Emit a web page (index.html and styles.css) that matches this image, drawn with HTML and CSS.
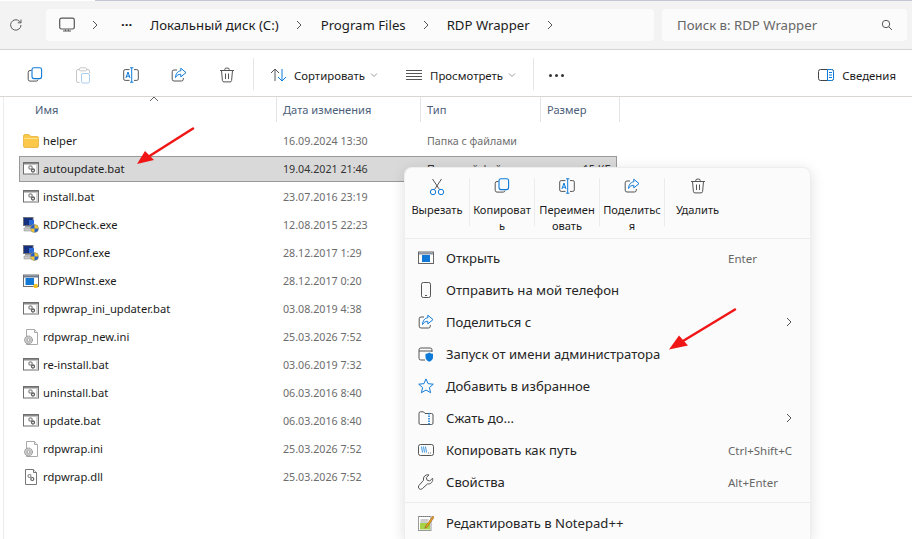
FILE: index.html
```html
<!DOCTYPE html>
<html lang="ru">
<head>
<meta charset="utf-8">
<title>RDP Wrapper</title>
<link rel="stylesheet" href="styles.css">
</head>
<body>
<svg class="defs" width="0" height="0">
  <defs>
    <symbol id="i-copy" viewBox="0 0 16 16">
      <path d="M4.5 3.5H3A1.8 1.8 0 0 0 1.2 5.3v7A1.8 1.8 0 0 0 3 14.1h6.2A1.8 1.8 0 0 0 11 12.6" fill="none" stroke="#555" stroke-width="1"/>
      <rect x="5" y=".8" width="9.6" height="10.8" rx="2" fill="none" stroke="#0f7bd8" stroke-width="1.1"/>
    </symbol>
    <symbol id="i-rename" viewBox="0 0 16 16">
      <path d="M6.5 2.6H2.2A1.5 1.5 0 0 0 .7 4.1v7.8a1.5 1.5 0 0 0 1.5 1.5h4.3M11 2.6h2.8a1.5 1.5 0 0 1 1.5 1.5v7.8a1.5 1.5 0 0 1-1.5 1.5H11" fill="none" stroke="#555"/>
      <path d="M7 .8h3.4M8.7.8v14.4M7 15.2h3.4M2.9 11 5 5l2 6M3.5 9.2h3" fill="none" stroke="#0f7bd8"/>
    </symbol>
    <symbol id="i-share" viewBox="0 0 16 16">
      <path d="M6 3H3a1.8 1.8 0 0 0-1.8 1.8v7.4A1.8 1.8 0 0 0 3 14h7.5a1.8 1.8 0 0 0 1.8-1.8V11" fill="none" stroke="#555"/>
      <path d="M9.8 1.2 15 5.6l-5.2 4.3V7.3C7.4 7.3 5.8 8.300 4.500 10.500 4.700 6.800 6.800 4 9.800 3.800z" fill="none" stroke="#0f7bd8" stroke-linejoin="round"/>
    </symbol>
    <symbol id="i-trash" viewBox="0 0 16 16">
      <path d="M1 3.500h14M5.800 3.300V2.400A1.300 1.300 0 0 1 7.100 1.100h1.800a1.300 1.300 0 0 1 1.300 1.300v.9M2.500 3.500l.9 10a1.600 1.600 0 0 0 1.600 1.400h6a1.600 1.600 0 0 0 1.600-1.400l.9-10M6.500 6.500v5.500M9.500 6.500v5.500" fill="none" stroke="#555"/>
    </symbol>
    <symbol id="i-bat" viewBox="0 0 16 16">
      <rect x=".5" y="1.500" width="15" height="11.500" fill="#fff" stroke="#6e6e6e"/>
      <rect x="1" y="2" width="14" height="1.500" fill="#8a8a8a"/>
      <rect x="13" y="3.500" width="2" height="9" fill="#d4d4d4"/>
      <circle cx="7.500" cy="6.500" r="1.700" fill="#fff" stroke="#8a8a8a" stroke-width="1.300"/>
      <circle cx="10" cy="9.500" r="1.500" fill="#fff" stroke="#5f5f5f" stroke-width="1.300"/>
    </symbol>
    <symbol id="i-ini" viewBox="0 0 16 16">
      <path d="M3.500 .5h8l3 3v12h-11z" fill="#fff" stroke="#a9a9a9"/>
      <path d="M11.500 .5v3h3" fill="#eee" stroke="#a9a9a9"/>
      <circle cx="5.500" cy="11" r="4" fill="#c9c9c9" stroke="#8c8c8c" stroke-dasharray="1.500 .8"/>
      <circle cx="5.500" cy="11" r="1.400" fill="#fff" stroke="#8c8c8c" stroke-width=".7"/>
    </symbol>
    <symbol id="i-dll" viewBox="0 0 16 16">
      <path d="M2.500 .5h8l3 3v12h-11z" fill="#fff" stroke="#777"/>
      <path d="M10.500 .5v3h3" fill="#eee" stroke="#777"/>
      <circle cx="6.500" cy="7" r="1.500" fill="#fff" stroke="#8a8a8a" stroke-width="1.200"/>
      <circle cx="9.300" cy="10" r="1.500" fill="#fff" stroke="#5f5f5f" stroke-width="1.200"/>
    </symbol>
    <symbol id="i-rdp" viewBox="0 0 16 16">
      <rect x=".5" y=".5" width="9.500" height="8" fill="#16307e" stroke="#6c6f7c"/>
      <rect x="2" y="9" width="7" height="1.500" fill="#9a9a9a"/>
      <rect x="1" y="11" width="9" height="3" fill="#c9c9c9" stroke="#888" stroke-width=".5"/>
      <rect x="6" y="3" width="5" height="5" fill="#2c6bd6"/>
      <circle cx="11.500" cy="11.500" r="4" fill="#f3c92f" stroke="#8a8a8a" stroke-width=".6"/>
      <path d="M11.500 7.700v3.800H7.700a3.800 3.800 0 0 1 3.800-3.800zM11.500 11.500h3.800a3.800 3.800 0 0 1-3.800 3.800z" fill="#2a62c8"/>
    </symbol>
    <symbol id="i-inst" viewBox="0 0 16 16">
      <rect x=".5" y="2" width="15" height="11.500" fill="#fff" stroke="#6e6e6e"/>
      <rect x="1" y="2.500" width="14" height="2" fill="#6f7c90"/>
      <rect x="2.500" y="5" width="8.500" height="7" fill="#1278d6"/>
      <path d="M11.500 11h3v4h-3l-1.500-2z" fill="#f0c020"/>
    </symbol>
    <symbol id="i-chev" viewBox="0 0 10 10">
      <path d="M3 1l4 4-4 4" fill="none" stroke="#555" stroke-width="1"/>
    </symbol>
    <symbol id="i-down" viewBox="0 0 10 10">
      <path d="M2 3.500 5 6.500l3-3" fill="none" stroke="#999" stroke-width="1"/>
    </symbol>
  </defs>
</svg>

<div class="topline"></div>
<header class="addrbar">
  <svg class="refresh" width="14" height="14" viewBox="0 0 14 14"><path d="M12 7a5.200 5.200 0 1 1-1.600-3.800L12 4.800M12 1.500v3.300H8.800" fill="none" stroke="#5c5c5c"/></svg>
  <nav class="crumbs">
    <svg class="pc" width="16" height="16" viewBox="0 0 16 16"><rect x=".7" y="1.200" width="14.600" height="10.800" rx="1.800" fill="none" stroke="#555" stroke-width="1.200"/><path d="M4 14h8M6.500 12.500v1.500M9.500 12.500v1.500" stroke="#555"/></svg>
    <svg class="chev chev-first" width="10" height="10"><use href="#i-chev"/></svg>
    <span class="dots">···</span>
    <span class="crumb c1">Локальный диск (C:)</span>
    <svg class="chev" width="10" height="10"><use href="#i-chev"/></svg>
    <span class="crumb c2">Program Files</span>
    <svg class="chev" width="10" height="10"><use href="#i-chev"/></svg>
    <span class="crumb c3">RDP Wrapper</span>
    <svg class="chev" width="10" height="10"><use href="#i-chev"/></svg>
  </nav>
  <div class="search">
    <span>Поиск в: RDP Wrapper</span>
    <svg width="12" height="12" viewBox="0 0 12 12"><circle cx="5" cy="5" r="3.700" fill="none" stroke="#555"/><path d="M7.800 7.800 11 11" stroke="#555"/></svg>
  </div>
</header>

<section class="toolbar">
  <button class="tool"><svg width="16" height="16"><use href="#i-copy"/></svg></button>
  <button class="tool tool-off"><svg width="16" height="17" viewBox="0 0 16 17"><path d="M4.500 2.500H3A1.500 1.500 0 0 0 1.500 4v10A1.500 1.500 0 0 0 3 15.500h1.500M11.500 2.500H13A1.500 1.500 0 0 1 14.500 4v2" fill="none" stroke="#c6c6c6"/><rect x="4.500" y=".8" width="7" height="3" rx="1" fill="none" stroke="#c6c6c6"/><rect x="6.500" y="6.500" width="8" height="9.500" rx="1.500" fill="none" stroke="#a9cdf0"/></svg></button>
  <button class="tool"><svg width="16" height="16"><use href="#i-rename"/></svg></button>
  <button class="tool"><svg width="16" height="16"><use href="#i-share"/></svg></button>
  <button class="tool"><svg width="16" height="16"><use href="#i-trash"/></svg></button>
  <i class="vsep"></i>
  <div class="tbtn sort">
    <svg width="18" height="16" viewBox="0 0 18 16"><path d="M5 14V2M1 6l4-4 4 4" fill="none" stroke="#555"/><path d="M12 2v12M8 10l4 4 4-4" fill="none" stroke="#0f7bd8"/></svg>
    <span>Сортировать</span>
    <svg width="10" height="10"><use href="#i-down"/></svg>
  </div>
  <div class="tbtn view">
    <svg width="16" height="12" viewBox="0 0 16 12"><path d="M0 1.500h16M0 4.500h16M0 7.500h16M0 10.500h16" stroke="#555"/></svg>
    <span>Просмотреть</span>
    <svg width="10" height="10"><use href="#i-down"/></svg>
  </div>
  <i class="vsep vsep2"></i>
  <span class="more"><b></b><b></b><b></b></span>
  <div class="details">
    <svg width="16" height="12" viewBox="0 0 16 12"><rect x=".5" y=".5" width="15" height="11" rx="2" fill="none" stroke="#444"/><path d="M9.500.5h4a2 2 0 0 1 2 2v7a2 2 0 0 1-2 2h-4z" fill="#fff" stroke="#0f7bd8"/><path d="M11 3.500h3M11 6h3M11 8.500h3" stroke="#0f7bd8"/></svg>
    <span>Сведения</span>
  </div>
</section>

<main class="files">
  <div class="cols">
    <span class="col col-name">Имя</span>
    <span class="col">Дата изменения</span>
    <span class="col">Тип</span>
    <span class="col">Размер</span>
    <svg class="caret" width="10" height="6" viewBox="0 0 10 6"><path d="M1 5l4-4 4 4" fill="none" stroke="#666"/></svg>
  </div>
  <div class="rows">
    <div class="row"><svg class="ficon" width="16" height="16" viewBox="0 0 16 16"><path d="M.5 3A1.500 1.500 0 0 1 2 1.500h4L8 3.500h6A1.500 1.500 0 0 1 15.500 5v8a1.500 1.500 0 0 1-1.500 1.500H2A1.500 1.500 0 0 1 .5 13z" fill="#fbc84a" stroke="#e4a92d" stroke-width=".7"/><path d="M.8 5.500h14.400" stroke="#fde08a"/></svg><span class="fname">helper</span><span class="fdate">16.09.2024 13:30</span><span class="ftype">Папка с файлами</span></div>
    <div class="row selected"><svg class="ficon" width="16" height="16"><use href="#i-bat"/></svg><span class="fname">autoupdate.bat</span><span class="fdate dark">19.04.2021 21:46</span><span class="ftype dark">Пакетный файл</span><span class="fsize dark">15 КБ</span></div>
    <div class="row"><svg class="ficon" width="16" height="16"><use href="#i-bat"/></svg><span class="fname">install.bat</span><span class="fdate">23.07.2016 23:19</span></div>
    <div class="row"><svg class="ficon" width="16" height="16"><use href="#i-rdp"/></svg><span class="fname">RDPCheck.exe</span><span class="fdate">12.08.2015 22:23</span></div>
    <div class="row"><svg class="ficon" width="16" height="16"><use href="#i-rdp"/></svg><span class="fname">RDPConf.exe</span><span class="fdate">28.12.2017 1:29</span></div>
    <div class="row"><svg class="ficon" width="16" height="16"><use href="#i-inst"/></svg><span class="fname">RDPWInst.exe</span><span class="fdate">28.12.2017 0:20</span></div>
    <div class="row"><svg class="ficon" width="16" height="16"><use href="#i-bat"/></svg><span class="fname">rdpwrap_ini_updater.bat</span><span class="fdate">03.08.2019 4:38</span></div>
    <div class="row"><svg class="ficon" width="16" height="16"><use href="#i-ini"/></svg><span class="fname">rdpwrap_new.ini</span><span class="fdate">25.03.2026 7:52</span></div>
    <div class="row"><svg class="ficon" width="16" height="16"><use href="#i-bat"/></svg><span class="fname">re-install.bat</span><span class="fdate">03.06.2019 7:32</span></div>
    <div class="row"><svg class="ficon" width="16" height="16"><use href="#i-bat"/></svg><span class="fname">uninstall.bat</span><span class="fdate">06.03.2016 8:40</span></div>
    <div class="row"><svg class="ficon" width="16" height="16"><use href="#i-bat"/></svg><span class="fname">update.bat</span><span class="fdate">06.03.2016 8:40</span></div>
    <div class="row"><svg class="ficon" width="16" height="16"><use href="#i-ini"/></svg><span class="fname">rdpwrap.ini</span><span class="fdate">25.03.2026 7:52</span></div>
    <div class="row"><svg class="ficon" width="16" height="16"><use href="#i-dll"/></svg><span class="fname">rdpwrap.dll</span><span class="fdate">25.03.2026 7:52</span></div>
  </div>
</main>

<aside class="menu">
  <div class="actions">
    <div class="act"><svg width="16" height="18" viewBox="0 0 16 18"><path d="M3.500 1 10.500 11.500M12.500 1 5.500 11.500" fill="none" stroke="#555"/><circle cx="4" cy="14" r="2.700" fill="none" stroke="#0f7bd8"/><circle cx="12" cy="14" r="2.700" fill="none" stroke="#0f7bd8"/></svg><span>Вырезать</span></div>
    <div class="act"><svg width="16" height="18"><use href="#i-copy" width="16" height="16"/></svg><span>Копироват<br>ь</span></div>
    <div class="act"><svg width="16" height="18"><use href="#i-rename" width="16" height="16"/></svg><span>Переимен<br>овать</span></div>
    <div class="act"><svg width="16" height="18"><use href="#i-share" width="16" height="16"/></svg><span>Поделитьс<br>я</span></div>
    <div class="act act-last"><svg width="16" height="18"><use href="#i-trash" width="16" height="16"/></svg><span>Удалить</span></div>
  </div>
  <ul class="items">
    <li class="item"><svg width="16" height="16" viewBox="0 0 16 16"><rect x=".5" y="2" width="15" height="11.500" fill="#fff" stroke="#666"/><rect x="1" y="2.500" width="14" height="2" fill="#8b95a5"/><rect x="4" y="5" width="8" height="7" fill="#1278d6"/></svg><span class="label">Открыть</span><span class="key">Enter</span></li>
    <li class="item"><svg width="16" height="16" viewBox="0 0 16 16"><rect x="3.500" y=".5" width="9" height="15" rx="1.800" fill="none" stroke="#555"/><path d="M7 13.500h2" stroke="#555"/></svg><span class="label">Отправить на мой телефон</span></li>
    <li class="item"><svg width="16" height="16"><use href="#i-share"/></svg><span class="label">Поделиться с</span><svg class="sub" width="10" height="10"><use href="#i-chev"/></svg></li>
    <li class="item"><svg width="16" height="16" viewBox="0 0 16 16"><path d="M7 14H2.800A1.800 1.800 0 0 1 1 12.200V3.800A1.800 1.800 0 0 1 2.800 2h9.400A1.800 1.800 0 0 1 14 3.800V6M1 5h13" fill="none" stroke="#555"/><path d="M11.300 6.500c1.100.9 2.400 1.200 3.700 1.200v3.600c0 2.300-1.500 3.800-3.700 4.500-2.200-.7-3.800-2.200-3.800-4.500V7.700c1.300 0 2.700-.3 3.800-1.200z" fill="#0f7bd8"/></svg><span class="label">Запуск от имени администратора</span></li>
    <li class="item"><svg width="16" height="16" viewBox="0 0 16 16"><path d="M8 .9 10.100 5.700l5.200.5-3.900 3.400 1.200 5.100L8 12l-4.600 2.700 1.200-5.100L.7 6.200l5.200-.5z" fill="none" stroke="#0f7bd8" stroke-linejoin="round"/></svg><span class="label">Добавить в избранное</span></li>
    <li class="item"><svg width="16" height="16" viewBox="0 0 16 16"><path d="M1 4V13a1.500 1.500 0 0 0 1.500 1.500h11A1.500 1.500 0 0 0 15 13V5a1.500 1.500 0 0 0-1.500-1.500H7L5.500 1.800H2.500A1.500 1.500 0 0 0 1 3.300z" fill="none" stroke="#555"/><path d="M11 3v11.500" stroke="#0f7bd8" stroke-width="1.500" stroke-dasharray="1.500 1"/></svg><span class="label">Сжать до...</span><svg class="sub" width="10" height="10"><use href="#i-chev"/></svg></li>
    <li class="item"><svg width="16" height="16" viewBox="0 0 16 16"><rect x=".5" y="2.500" width="15" height="11" rx="2" fill="none" stroke="#555"/><path d="M3.500 4.500l1 6M5.500 4.500l1 6M7.500 4.500l1 6" stroke="#0f7bd8" stroke-width=".8"/><path d="M10 11h.8M12 11h.8" stroke="#555"/></svg><span class="label">Копировать как путь</span><span class="key">Ctrl+Shift+C</span></li>
    <li class="item"><svg width="16" height="16" viewBox="0 0 16 16"><path d="M14.500 4.200 11.700 7l-2.600-.8-.8-2.600L11 .9A4.400 4.400 0 0 0 5.500 6.300L1 11.400a2.300 2.300 0 0 0 .1 3.200 2.300 2.300 0 0 0 3.300 0l5.100-4.700a4.400 4.400 0 0 0 5-5.700z" fill="none" stroke="#555" stroke-linejoin="round"/></svg><span class="label">Свойства</span><span class="key">Alt+Enter</span></li>
  </ul>
  <div class="item item-np"><svg width="16" height="16" viewBox="0 0 16 16"><rect x=".5" y="1.500" width="12.500" height="14" fill="#fff" stroke="#999"/><path d="M1 1.500h12" stroke="#777" stroke-dasharray="1 1"/><rect x="2" y="8" width="10" height="6.500" fill="#a6d24a"/><path d="M2.500 5h8M2.500 7h7" stroke="#999"/><path d="M15 1 8 10.500l-1.200 2.700 2.700-1.500L16 2.500z" fill="#e8a020" stroke="#8a4a10" stroke-width=".5"/></svg><span class="label">Редактировать в Notepad++</span></div>
</aside>

<svg class="arrow arrow-a" width="60" height="40" viewBox="0 0 60 40"><path d="M57 1.500 12 30" stroke="#f01616" stroke-width="2.500" stroke-linecap="round"/><path d="M1 37 9 24 18 33z" fill="#f01616"/></svg>
<svg class="arrow arrow-b" width="70" height="44" viewBox="0 0 70 44"><path d="M66 1.500 14 33" stroke="#f01616" stroke-width="2.500" stroke-linecap="round"/><path d="M0 41.500 10 27.500 19 37.500z" fill="#f01616"/></svg>
</body>
</html>
```
FILE: styles.css
```css
* { box-sizing: border-box; }
html, body { margin: 0; height: 539px; overflow: hidden; }
body {
  position: relative;
  background: #fff;
  color: #1b1b1b;
  font-family: "Noto Sans", "Open Sans", sans-serif;
  font-size: 11.2px;
}
.defs { position: absolute; }
svg { display: block; flex: none; }

.topline { height: 1px; margin-left: 95px; background: #c5c8d2; }

.addrbar {
  height: 49px;
  display: flex;
  align-items: center;
  padding: 0 5px 1px 9px;
  background: #f3f3f3;
  border-bottom: 1px solid #d4d4d4;
}
.refresh { margin-right: 23px; }
.crumbs {
  width: 608px;
  height: 32px;
  display: flex;
  align-items: center;
  padding-left: 13px;
  background: #fbfbfb;
  border-radius: 4px;
  font-size: 13.2px;
}
.chev-first { margin-left: 15px; }
.dots { width: 14px; margin-left: 21px; font-weight: 700; line-height: 1; }
.crumb { white-space: nowrap; }
.c1 { margin-left: 15px; margin-right: 15px; }
.c2 { margin-left: 17px; margin-right: 15px; }
.c3 { margin-left: 16px; margin-right: 15px; }
.search {
  width: 245px;
  height: 32px;
  margin-left: 8px;
  padding: 0 14px 0 15px;
  display: flex;
  align-items: center;
  justify-content: space-between;
  background: #fbfbfb;
  border-radius: 4px;
  color: #666;
  font-size: 13.2px;
}

.toolbar {
  height: 47px;
  display: flex;
  align-items: center;
  padding: 4px 0 0 27px;
  border-bottom: 1px solid #d9d5d2;
  font-size: 11.4px;
}
.tool {
  width: 16px;
  height: 17px;
  margin-right: 32px;
  padding: 0;
  border: 0;
  background: none;
}
.tool:nth-of-type(5) { margin-right: 18px; }
.vsep { width: 1px; height: 32px; margin-top: -3px; background: #e6e6e6; }
.vsep2 { margin-left: 16px; }
.tbtn { display: flex; align-items: center; }
.sort { margin-left: 16px; }
.sort span { margin-left: 6px; }
.sort svg:last-child { margin-left: 4px; }
.view { margin-left: 27px; }
.view span { margin-left: 8px; }
.view svg:last-child { margin-left: 4px; }
.more { display: flex; gap: 3px; margin-left: 15px; }
.more b { width: 3px; height: 3px; border-radius: 50%; background: #333; }
.details { display: flex; align-items: center; gap: 8px; margin-left: auto; padding-right: 16px; }

.files { position: relative; margin-left: 3px; border-left: 1px solid #ececec; height: 442px; }
.cols {
  position: relative;
  height: 25px;
  display: grid;
  grid-template-columns: 272px 144px 120px 80px;
  align-items: stretch;
}
.col {
  padding-left: 6px;
  padding-top: 5px;
  border-left: 1px solid #e4e4e4;
  color: #4c607a;
  font-size: 11.1px;
}
.col:last-of-type { border-right: 1px solid #e4e4e4; }
.col-name { padding-left: 31px; border-left: 0; }
.caret { position: absolute; left: 145px; top: -1px; }

.rows { display: flex; flex-direction: column; gap: 2px; padding: 6px 0 0 15px; }
.row {
  width: 598px;
  height: 26px;
  display: flex;
  align-items: center;
  padding-left: 4px;
  border: 1px solid transparent;
}
.selected { background: #d9d9d9; border-color: #999; }
.ficon { margin-left: -1px; }
.fname { width: 240px; margin-left: 4px; margin-bottom: 2px; white-space: nowrap; }
.fdate { width: 144px; color: #6d6d6d; font-size: 10.7px; white-space: nowrap; }
.ftype { color: #6d6d6d; font-size: 10.7px; white-space: nowrap; }
.fsize { margin-left: auto; padding-right: 5px; color: #6d6d6d; font-size: 10.7px; }
.dark { color: #333; }

.menu {
  position: absolute;
  left: 404px;
  top: 167px;
  width: 407px;
  height: 372px;
  background: #fbfbfb;
  border-radius: 8px 8px 0 0;
  border: 1px solid #eeeeee;
  border-bottom: 0;
  box-shadow: 0 3px 14px rgba(0, 0, 0, .13);
}
.actions {
  height: 71px;
  display: flex;
  padding-top: 10px;
  border-bottom: 1px solid #ececec;
}
.act {
  width: 65px;
  height: 48px;
  display: flex;
  flex-direction: column;
  align-items: center;
  border-right: 1px solid #ececec;
  text-align: center;
  font-size: 11.1px;
  line-height: 16px;
  white-space: nowrap;
}
.act span { margin-top: 6px; }
.act-last { border-right: 0; }
.items { list-style: none; margin: 0; padding: 3px 0 4px; border-bottom: 1px solid #ececec; height: 264px; }
.item {
  height: 32px;
  display: flex;
  align-items: center;
  padding-left: 13px;
  font-size: 13.1px;
  color: #262626;
}
.label { margin-left: 12px; white-space: nowrap; }
.key { margin-left: auto; width: 82px; color: #666; font-size: 11.5px; }
.sub { margin-left: auto; margin-right: 16px; }
.item-np { height: 36px; padding-top: 4px; }

.arrow { position: absolute; }
.arrow-a { left: 136px; top: 127px; }
.arrow-b { left: 669px; top: 308px; }
```
